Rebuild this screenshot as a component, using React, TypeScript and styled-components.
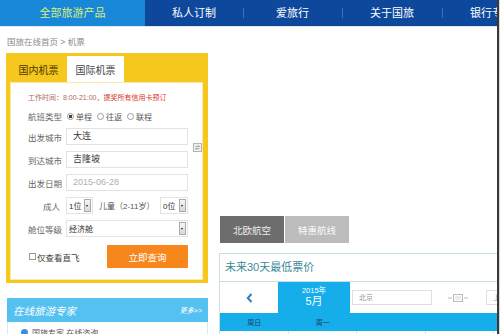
import styled, { createGlobalStyle } from "styled-components";

const GlobalStyle = createGlobalStyle`
  html, body {
    margin: 0;
    padding: 0;
  }
  body {
    width: 500px;
    height: 334px;
    overflow: hidden;
    background: #fff;
    font-family: "Liberation Sans", "Noto Sans CJK SC", sans-serif;
  }
`;

const navItems = [
    { label: "全部旅游产品", width: 145 },
    { label: "私人订制", width: 98 },
    { label: "爱旅行", width: 99 },
    { label: "关于国旅", width: 100 },
    { label: "银行专享", width: 100 },
];

const weekDays = ["周日", "周一", "", "", "", "", ""];

const SwapIcon = () => (
    <svg width="9" height="9" viewBox="0 0 9 9">
        <rect x="0.5" y="0.5" width="8" height="8" fill="#eee" stroke="#b5b5b5" />
        <path d="M2.5 3.5h4M5 2l1.5 1.5M6.5 5.5h-4M4 7L2.5 5.5" stroke="#999" strokeWidth="0.8" fill="none" />
    </svg>
);

const CalendarIcon = () => (
    <svg width="22" height="10" viewBox="0 0 22 10">
        <path d="M1 5h4M17 5h4" stroke="#bbb" strokeWidth="1" />
        <rect x="6.5" y="1.5" width="9" height="7" fill="none" stroke="#bbb" />
        <path d="M8 4h6M8 6h6" stroke="#ccc" strokeWidth="0.8" />
    </svg>
);

const App = () => {
    return (
        <>
            <GlobalStyle />
            <Page>
                <Main>
                    <NavBar>
                        {navItems.map((item, i) => (
                            <NavItem key={item.label} $w={item.width} $active={i === 0} $sep={i > 1}>
                                {item.label}
                            </NavItem>
                        ))}
                    </NavBar>
                    <Body>
                        <LeftCol>
                            <Breadcrumb>国旅在线首页 &gt; 机票</Breadcrumb>
                            <SearchBox>
                                <TabBar>
                                    <Tab>国内机票</Tab>
                                    <Tab $active>国际机票</Tab>
                                </TabBar>
                                <Content>
                                    <Notice>
                                        <span>工作时间：8:00-21:00，</span>
                                        <strong>提奖所有信用卡预订</strong>
                                    </Notice>
                                    <RadioRow>
                                        <Label>航班类型</Label>
                                        <Radio $checked />
                                        <RadioText>单程</RadioText>
                                        <Radio />
                                        <RadioText>往返</RadioText>
                                        <Radio />
                                        <RadioText>联程</RadioText>
                                    </RadioRow>
                                    <FieldRow>
                                        <Label>出发城市</Label>
                                        <Field>大连</Field>
                                    </FieldRow>
                                    <FieldRow>
                                        <Label>到达城市</Label>
                                        <Field>吉隆坡</Field>
                                    </FieldRow>
                                    <FieldRow>
                                        <Label>出发日期</Label>
                                        <Field $muted>2015-06-28</Field>
                                    </FieldRow>
                                    <FieldRow>
                                        <Label $right>成人</Label>
                                        <Select $w={27}>
                                            <span>1位</span>
                                            <Arrow />
                                        </Select>
                                        <ChildText>儿童（2-11岁）</ChildText>
                                        <Select $w={28} $push>
                                            <span>0位</span>
                                            <Arrow />
                                        </Select>
                                    </FieldRow>
                                    <FieldRow>
                                        <Label>舱位等级</Label>
                                        <Select $w={122}>
                                            <span>经济舱</span>
                                            <Arrow />
                                        </Select>
                                    </FieldRow>
                                    <ActionRow>
                                        <CheckLabel>
                                            <CheckBox />
                                            仅查看直飞
                                        </CheckLabel>
                                        <SearchButton>立即查询</SearchButton>
                                    </ActionRow>
                                    <SwapButton>
                                        <SwapIcon />
                                    </SwapButton>
                                </Content>
                            </SearchBox>
                            <ExpertHeader>
                                <ExpertTitle>在线旅游专家</ExpertTitle>
                                <MoreLink>更多&gt;&gt;</MoreLink>
                            </ExpertHeader>
                            <ExpertList>
                                <ExpertRow>
                                    <Dot />
                                    <span>国旅专家 在线咨询</span>
                                </ExpertRow>
                            </ExpertList>
                        </LeftCol>
                        <RightCol>
                            <FeatureTabs>
                                <FeatureTab $dark>北欧航空</FeatureTab>
                                <FeatureTab>特惠航线</FeatureTab>
                            </FeatureTabs>
                            <PricePanel>
                                <PanelTitle>未来30天最低票价</PanelTitle>
                                <CalRow>
                                    <PrevCell>
                                        <svg width="7" height="10" viewBox="0 0 7 10">
                                            <path d="M5.5 1L1.8 5l3.7 4" stroke="#2b7fc4" strokeWidth="2" fill="none" />
                                        </svg>
                                    </PrevCell>
                                    <MonthCell>
                                        <Year>2015年</Year>
                                        <Month>5月</Month>
                                    </MonthCell>
                                    <CityInput $w={80}>北京</CityInput>
                                    <IconSlot>
                                        <CalendarIcon />
                                    </IconSlot>
                                    <CityInput $w={60}>上海</CityInput>
                                </CalRow>
                                <WeekStrip>
                                    {weekDays.map((d, i) => (
                                        <WeekDay key={i}>{d}</WeekDay>
                                    ))}
                                </WeekStrip>
                                <DayGrid>
                                    {weekDays.map((_, i) => (
                                        <DayCell key={i} />
                                    ))}
                                </DayGrid>
                            </PricePanel>
                        </RightCol>
                    </Body>
                </Main>
                <Edge />
            </Page>
        </>
    );
};

const Page = styled.div`
    display: flex;
    width: 500px;
    height: 334px;
`;

const Main = styled.div`
    width: 497px;
    display: flex;
    flex-direction: column;
    overflow: hidden;
`;

const Edge = styled.div`
    width: 3px;
    background: linear-gradient(to right, #3a3a3a 0 2px, #d8d8d8 2px);
`;

const NavBar = styled.div`
    display: flex;
    flex: 0 0 26px;
    background: #0e489c;
    box-shadow: 0 1px 0 #dfe8f3;
`;

const NavItem = styled.div<{ $w: number; $active?: boolean; $sep?: boolean }>`
    position: relative;
    flex: 0 0 ${p => p.$w}px;
    line-height: 26px;
    text-align: center;
    font-size: 11px;
    color: ${p => (p.$active ? "#d6f07a" : "#fff")};
    background: ${p => (p.$active ? "#1987d7" : "transparent")};
    white-space: nowrap;

    &::before {
        content: "";
        display: ${p => (p.$sep ? "block" : "none")};
        position: absolute;
        left: 0;
        top: 8px;
        width: 1px;
        height: 10px;
        background: #3f6fb6;
    }
`;

const Body = styled.div`
    display: flex;
    flex: 1;
    min-height: 0;
`;

const LeftCol = styled.div`
    flex: 0 0 208px;
    box-sizing: border-box;
    padding-left: 6px;
`;

const Breadcrumb = styled.div`
    height: 27px;
    box-sizing: border-box;
    padding: 9px 0 0 1px;
    font-size: 8.5px;
    color: #8a8a8a;
`;

const SearchBox = styled.div`
    width: 202px;
    box-sizing: border-box;
    background: #f6c71c;
    padding: 0 5px 3px 4px;
`;

const TabBar = styled.div`
    display: flex;
    align-items: flex-end;
    height: 29px;
`;

const Tab = styled.div<{ $active?: boolean }>`
    width: 57px;
    height: 26px;
    display: flex;
    align-items: center;
    justify-content: center;
    font-size: 10px;
    color: ${p => (p.$active ? "#444" : "#4a3500")};
    background: ${p => (p.$active ? "#fff" : "transparent")};
`;

const Content = styled.div`
    position: relative;
    background: #fff;
    padding: 10px 0 12px 18px;
    box-shadow: inset 0 0 0 1px #fbe9a6;
`;

const Notice = styled.div`
    height: 12px;
    line-height: 12px;
    font-size: 7px;
    color: #b0685a;
    white-space: nowrap;

    strong {
        font-weight: normal;
        color: #d8352a;
    }
`;

const RadioRow = styled.div`
    display: flex;
    align-items: center;
    height: 12px;
    margin-top: 6px;
`;

const Label = styled.div<{ $right?: boolean }>`
    flex: 0 0 38px;
    box-sizing: border-box;
    padding-right: ${p => (p.$right ? "6px" : "0")};
    text-align: ${p => (p.$right ? "right" : "left")};
    font-size: 8.5px;
    color: #666;
    white-space: nowrap;
`;

const Radio = styled.span<{ $checked?: boolean }>`
    width: 5px;
    height: 5px;
    margin: 0 2px 0 1px;
    border-radius: 50%;
    border: 1px solid #999;
    background: ${p => (p.$checked ? "radial-gradient(circle, #444 0 1.6px, #fff 1.8px)" : "#fff")};
`;

const RadioText = styled.span`
    font-size: 8px;
    color: #555;
    margin-right: 4px;
`;

const FieldRow = styled.div`
    display: flex;
    align-items: center;
    width: 160px;
    height: 17px;
    margin-top: 6px;
`;

const Field = styled.div<{ $muted?: boolean }>`
    width: 122px;
    height: 17px;
    box-sizing: border-box;
    border: 1px solid #e3e3e3;
    padding-left: 6px;
    line-height: 15px;
    font-size: 9px;
    color: ${p => (p.$muted ? "#b0b0b0" : "#333")};
`;

const Select = styled.div<{ $w: number; $push?: boolean }>`
    display: flex;
    align-items: center;
    justify-content: space-between;
    flex: 0 0 ${p => p.$w}px;
    height: 17px;
    box-sizing: border-box;
    margin-left: ${p => (p.$push ? "auto" : "0")};
    padding: 0 1px 0 2px;
    border: 1px solid #e3e3e3;
    font-size: 8px;
    color: #333;
    white-space: nowrap;
`;

const Arrow = styled.span`
    position: relative;
    flex: 0 0 7px;
    height: 13px;
    box-sizing: border-box;
    border: 1px solid #aaa;
    background: linear-gradient(#f6f6f6, #d8d8d8);

    &::after {
        content: "";
        position: absolute;
        left: 1px;
        top: 5px;
        border-left: 1.5px solid transparent;
        border-right: 1.5px solid transparent;
        border-top: 2px solid #222;
    }
`;

const ChildText = styled.span`
    margin-left: 6px;
    font-size: 8px;
    color: #555;
    white-space: nowrap;
`;

const ActionRow = styled.div`
    display: flex;
    align-items: center;
    justify-content: space-between;
    width: 160px;
    height: 23px;
    margin-top: 8px;
`;

const CheckLabel = styled.div`
    display: flex;
    align-items: center;
    margin-left: 1px;
    font-size: 8.5px;
    color: #444;
`;

const CheckBox = styled.span`
    width: 5px;
    height: 5px;
    border: 1px solid #999;
    margin-right: 1px;
`;

const SearchButton = styled.div`
    width: 81px;
    height: 23px;
    display: flex;
    align-items: center;
    justify-content: center;
    background: #f7861d;
    border-radius: 1px;
    font-size: 9.5px;
    color: #fff;
`;

const SwapButton = styled.div`
    position: absolute;
    left: 183px;
    top: 61px;
    line-height: 0;
`;

const ExpertHeader = styled.div`
    display: flex;
    align-items: center;
    justify-content: space-between;
    width: 201px;
    height: 24px;
    box-sizing: border-box;
    margin: 15px 0 0 1px;
    padding: 0 6px;
    background: #55c1f0;
    color: #fff;
`;

const ExpertTitle = styled.span`
    font-size: 10.5px;
    font-style: italic;
`;

const MoreLink = styled.span`
    font-size: 7px;
    font-style: italic;
`;

const ExpertList = styled.div`
    width: 201px;
    box-sizing: border-box;
    margin-left: 1px;
    padding: 5px 0 0 13px;
    border: 1px solid #d5ecf7;
    border-top: none;
`;

const ExpertRow = styled.div`
    display: flex;
    align-items: center;
    gap: 4px;
    font-size: 8px;
    color: #555;
`;

const Dot = styled.span`
    width: 7px;
    height: 7px;
    border-radius: 50%;
    background: #3a8fd8;
`;

const RightCol = styled.div`
    flex: 1;
    min-width: 0;
    padding: 190px 0 0 11px;
`;

const FeatureTabs = styled.div`
    display: flex;
    gap: 1px;
    margin-left: 1px;
`;

const FeatureTab = styled.div<{ $dark?: boolean }>`
    width: 64px;
    height: 27px;
    display: flex;
    align-items: center;
    justify-content: center;
    font-size: 9.5px;
    color: ${p => (p.$dark ? "#ececec" : "#fafafa")};
    background: ${p => (p.$dark ? "#6d6d6d" : "#bcbcbc")};
`;

const PricePanel = styled.div`
    margin-top: 10px;
    border: 1px solid #c9dfe2;
    border-right: none;
`;

const PanelTitle = styled.div`
    height: 27px;
    line-height: 27px;
    padding-left: 5px;
    font-size: 11px;
    color: #3c8a96;
    border-bottom: 1px solid #c9dfe2;
`;

const CalRow = styled.div`
    display: flex;
    align-items: center;
    height: 31px;
    white-space: nowrap;
`;

const PrevCell = styled.div`
    flex: 0 0 58px;
    display: flex;
    align-items: center;
    justify-content: center;
`;

const MonthCell = styled.div`
    flex: 0 0 72px;
    height: 31px;
    display: flex;
    flex-direction: column;
    align-items: center;
    justify-content: center;
    background: #15aeea;
    color: #fff;
    line-height: 1.15;
`;

const Year = styled.span`
    font-size: 7.5px;
`;

const Month = styled.span`
    font-size: 11px;
`;

const CityInput = styled.div<{ $w: number }>`
    flex: 0 0 ${p => p.$w}px;
    height: 15px;
    box-sizing: border-box;
    margin-left: 2px;
    padding-left: 6px;
    border: 1px solid #e0e0e0;
    line-height: 13px;
    font-size: 7px;
    color: #999;
`;

const IconSlot = styled.div`
    flex: 0 0 52px;
    display: flex;
    justify-content: center;
    line-height: 0;
`;

const WeekStrip = styled.div`
    display: grid;
    grid-template-columns: repeat(7, 68.5px);
    height: 18px;
    background: #15aeea;
`;

const WeekDay = styled.div`
    display: flex;
    align-items: center;
    justify-content: center;
    font-size: 7px;
    color: #1f3f6e;
`;

const DayGrid = styled.div`
    display: grid;
    grid-template-columns: repeat(7, 68.5px);
    height: 20px;
`;

const DayCell = styled.div`
    border-right: 1px solid #d6e4e8;
`;

export default App;
